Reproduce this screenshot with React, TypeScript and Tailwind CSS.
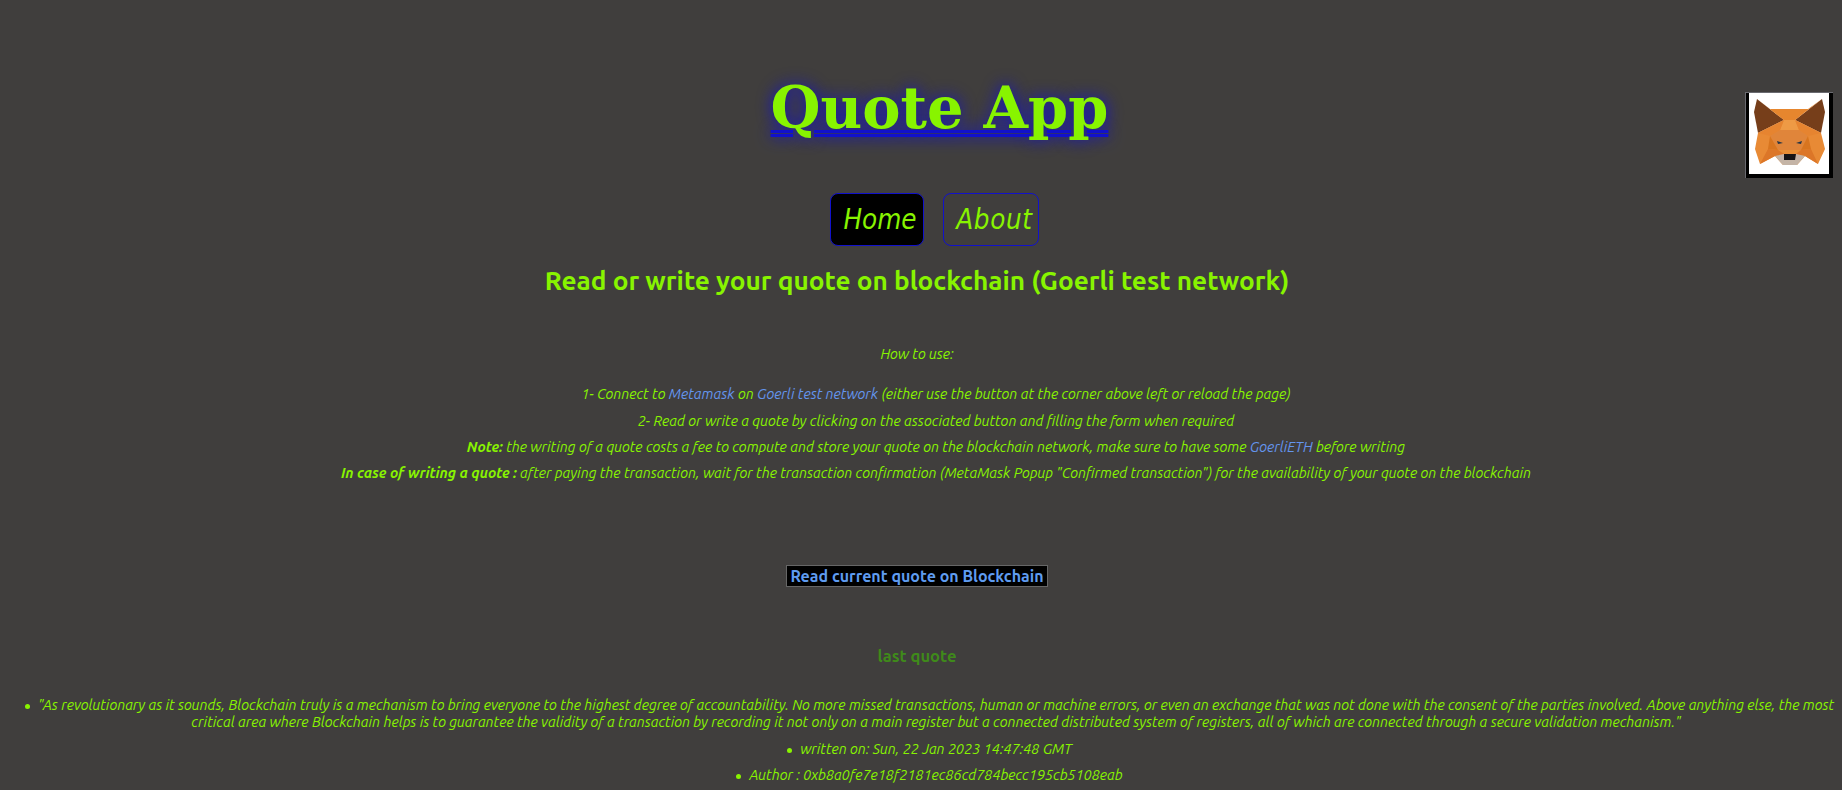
const Link = ({ children }: { children: React.ReactNode }) => (
  <a href="#" className="text-[#6495ed]">{children}</a>
)

function Fox() {
  return (
    <svg viewBox="0 0 80 81" className="w-full h-full bg-white block">
      {/* ears */}
      <polygon points="8,6 35,27 9,40 5,19" fill="#763e1a" />
      <polygon points="73,6 46,27 72,40 76,19" fill="#763e1a" />
      {/* head */}
      <polygon points="8,6 21,16 59,16 73,6 46,27 72,40 76,56 69,71 56,63 48,72 34,72 26,63 11,71 6,56 9,40 35,27" fill="#e88a35" />
      <polygon points="21,16 59,16 46,27 35,27" fill="#e6862e" />
      <polygon points="35,27 46,27 50,37 31,37" fill="#ee9a45" />
      <polygon points="9,40 35,27 31,37 21,43" fill="#e68430" />
      <polygon points="72,40 46,27 50,37 59,43" fill="#e68430" />
      {/* muzzle */}
      <polygon points="31,37 50,37 59,43 52,57 29,57 21,43" fill="#e0853a" />
      <polygon points="29,57 52,57 47,61 35,61" fill="#e88f35" />
      <polygon points="19,56 29,57 35,61 26,63 11,71" fill="#dc7628" />
      <polygon points="62,56 52,57 47,61 56,63 69,71" fill="#dc7628" />
      <polygon points="21,43 29,57 19,56" fill="#d8751f" />
      <polygon points="59,43 52,57 62,56" fill="#d8751f" />
      {/* chin and nose */}
      <polygon points="26,63 35,61 47,61 56,63 48,72 34,72" fill="#c4b4a6" />
      <polygon points="35,61 47,61 46,67 35,67" fill="#161616" />
      {/* eyes */}
      <polygon points="28,48 34,50 29,51" fill="#233447" />
      <polygon points="53,48 47,50 52,51" fill="#233447" />
    </svg>
  )
}

const bullet = "before:content-[''] before:inline-block before:w-[5px] before:h-[5px] before:rounded-full before:bg-current before:align-middle before:-ml-[13px] before:mr-[8px]"

export default function App() {
  return (
    <div className="h-[790px] overflow-hidden bg-[#403e3d] pr-2 text-[#88f400] italic text-center font-['Ubuntu','Noto_Sans',sans-serif]">
      <header className="flex items-start pt-[70px]">
        <div className="flex-1 pl-[134px]">
          <h1 className="font-['DejaVu_Serif',serif] not-italic font-bold text-[57.4px] leading-[76px] underline decoration-double decoration-[3px] decoration-[#1111cc] [text-shadow:0_0_16px_#1111cc]">
            Quote App
          </h1>
        </div>
        <div className="mt-[22px] mr-[1px] w-[88px] h-[86px] border-t border-l border-[#6a6a70] bg-black pl-[3px] pr-[4px] pb-[4px] shrink-0">
          <Fox />
        </div>
      </header>

      <nav className="flex justify-center gap-[19px] mt-[15px] pl-[34px] font-['DejaVu_Sans_Condensed','DejaVu_Sans',sans-serif] text-[27.5px]">
        <a className="flex items-center justify-end w-[94px] h-[53px] pr-[6px] bg-black border border-[#1111cc] rounded-[8px]">Home</a>
        <a className="flex items-center justify-end w-[96px] h-[53px] pr-[5px] tracking-[0.6px] border border-[#1111cc] rounded-[8px]">About</a>
      </nav>

      <h2 className="not-italic font-bold text-[26.2px] leading-[32px] mt-[19px]">
        Read or write your quote on blockchain (Goerli test network)
      </h2>

      <section className="mt-[47px] text-[14.35px] leading-[20px]">
        <p>How to use:</p>
        <ul className="mt-[20px] pl-[38px]">
          <li>
            1- Connect to <Link>Metamask</Link> on <Link>Goerli test network</Link> (either use the button at the corner above left or reload the page)
          </li>
          <li className="mt-[7px]">2- Read or write a quote by clicking on the associated button and filling the form when required</li>
          <li className="mt-[6px]">
            <b>Note:</b> the writing of a quote costs a fee to compute and store your quote on the blockchain network, make sure to have some <Link>GoerliETH</Link> before writing
          </li>
          <li className="mt-[6px]">
            <b>In case of writing a quote :</b> after paying the transaction, wait for the transaction confirmation (MetaMask Popup "Confirmed transaction") for the availability of your quote on the blockchain
          </li>
        </ul>
      </section>

      <div className="mt-[81px]">
        <button className="not-italic font-bold text-[16px] leading-[20px] px-[3px] bg-black text-[#5f9cf0] border border-[#666]">
          Read current quote on Blockchain
        </button>
      </div>

      <h3 className="mt-[58px] not-italic font-bold text-[16.5px] leading-[20px] text-[#3f8a1a]">last quote</h3>

      <ul className="mt-[31px] text-[14.33px] leading-[17px] pl-[34px] -mr-[4px]">
        <li className={bullet}>"As revolutionary as it sounds, Blockchain truly is a mechanism to bring everyone to the highest degree of accountability. No more missed transactions, human or machine errors, or even an exchange that was not done with the consent of the parties involved. Above anything else, the most critical area where Blockchain helps is to guarantee the validity of a transaction by recording it not only on a main register but a connected distributed system of registers, all of which are connected through a secure validation mechanism."</li>
        <li className={`mt-[10px] ${bullet}`}>written on: Sun, 22 Jan 2023 14:47:48 GMT</li>
        <li className={`mt-[9px] ${bullet}`}>Author : 0xb8a0fe7e18f2181ec86cd784becc195cb5108eab</li>
      </ul>
    </div>
  )
}
